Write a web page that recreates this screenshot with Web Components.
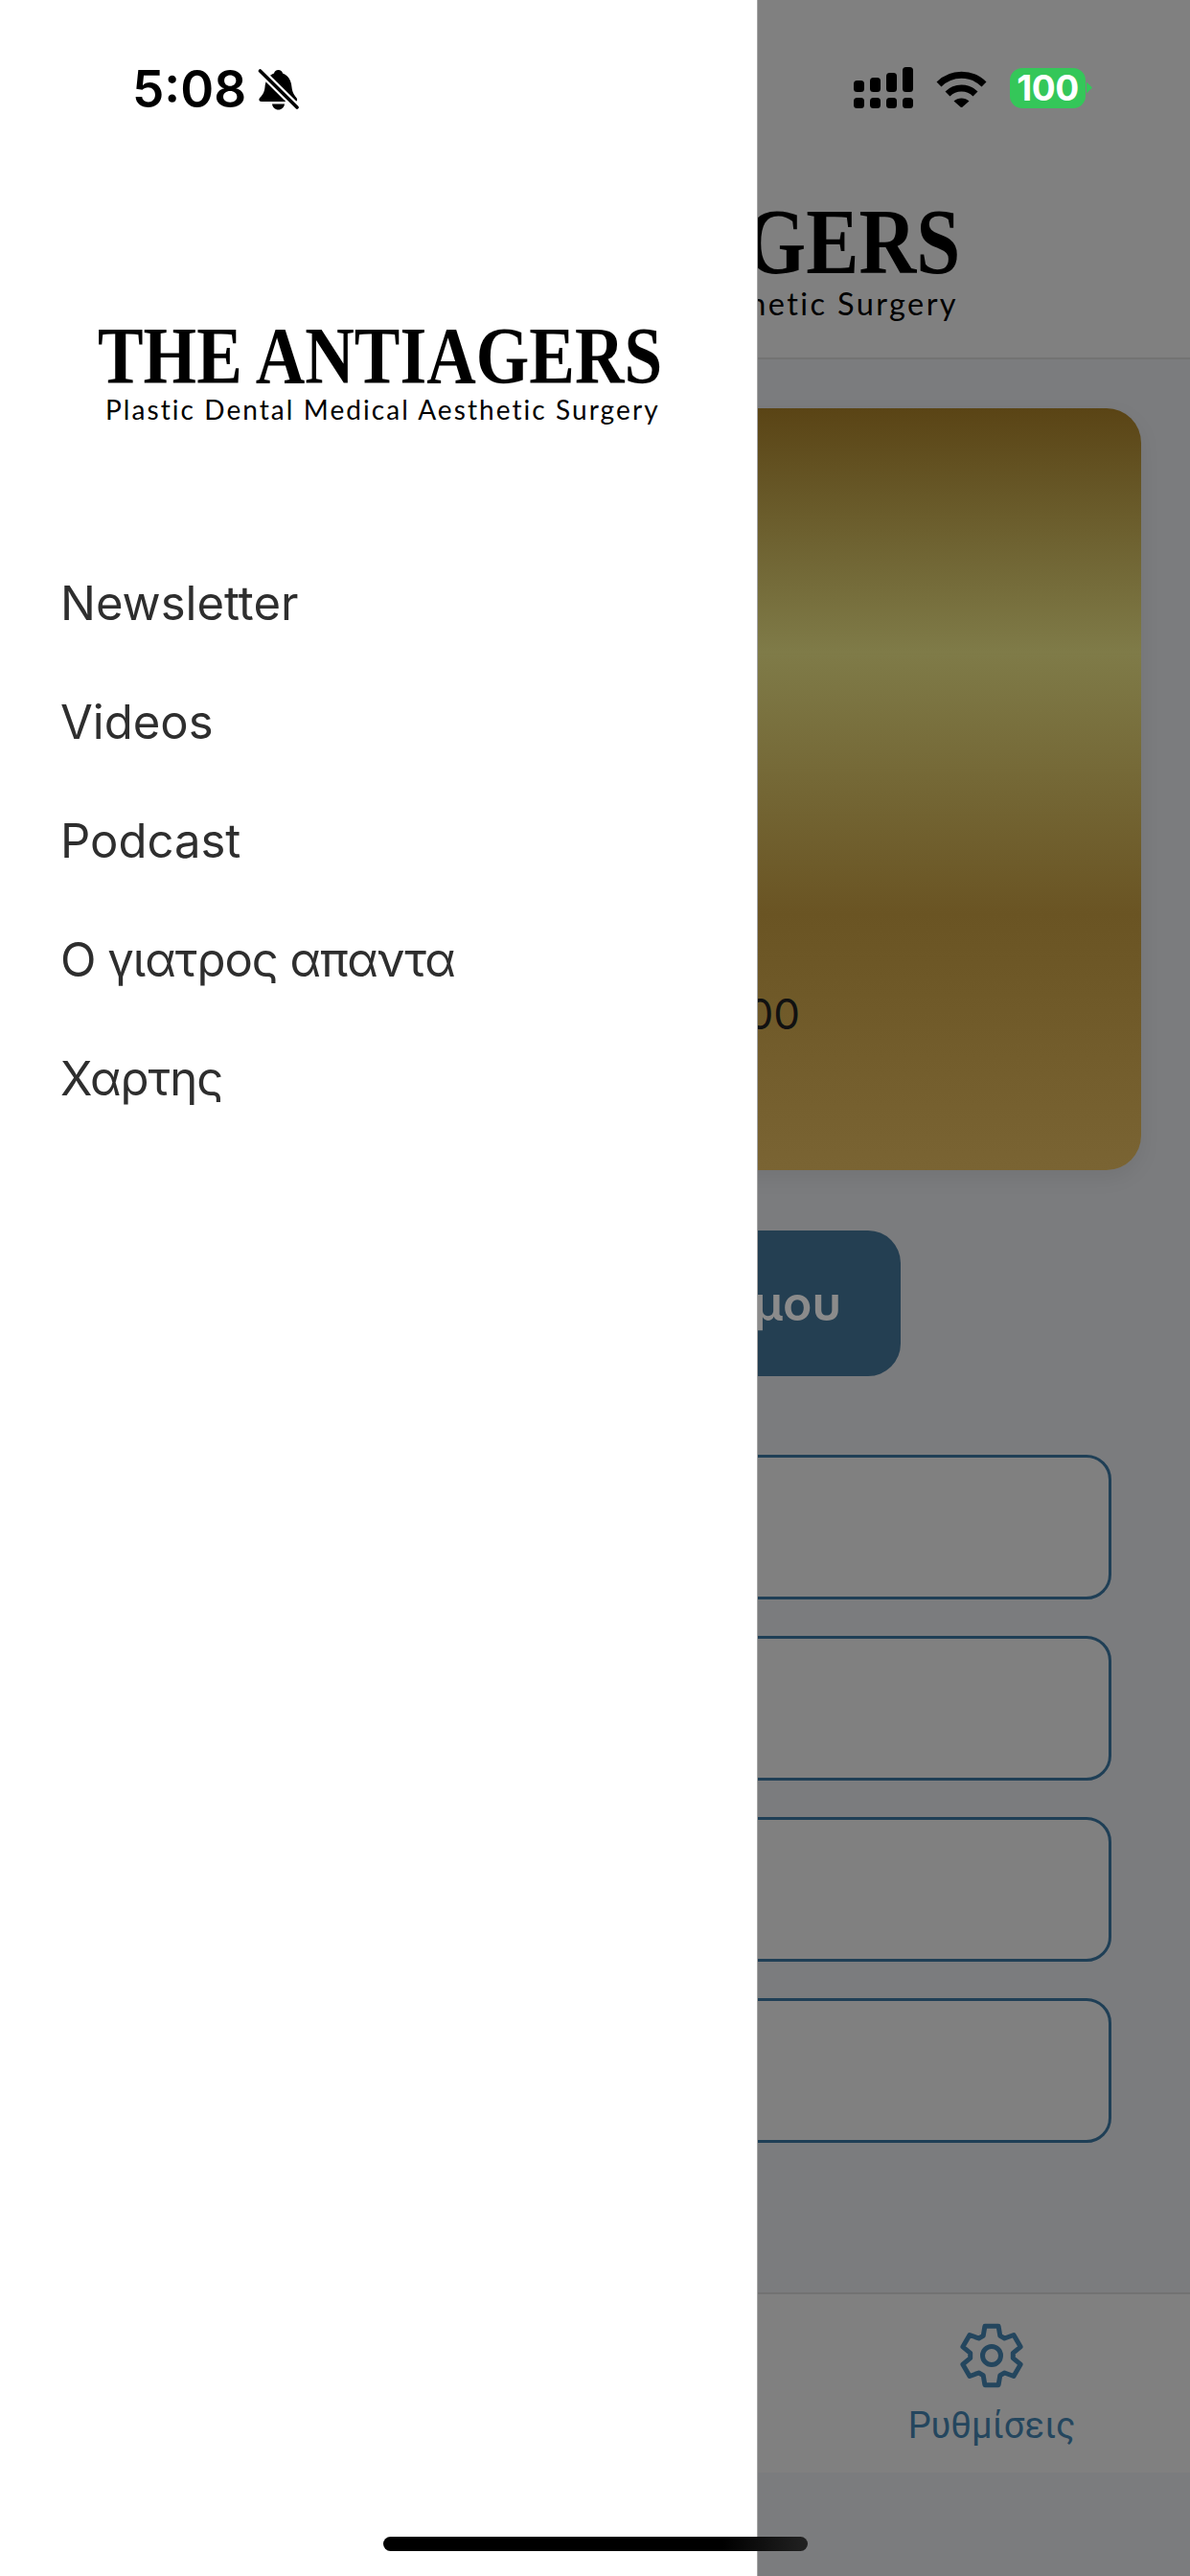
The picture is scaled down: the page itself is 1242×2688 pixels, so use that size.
<!DOCTYPE html>
<html lang="el">
<head>
<meta charset="utf-8">
<title>The Antiagers</title>
<style>
  html, body { margin: 0; padding: 0; background: #7b7c7e; }
</style>
</head>
<body>
<app-shell>
  <side-drawer slot="drawer">
    <status-clock slot="status" time="5:08"></status-clock>
    <brand-logo slot="logo" name="THE ANTIAGERS" tagline="Plastic Dental Medical Aesthetic Surgery"></brand-logo>
    <menu-item>Newsletter</menu-item>
    <menu-item>Videos</menu-item>
    <menu-item>Podcast</menu-item>
    <menu-item tight>Ο γιατρος απαντα</menu-item>
    <menu-item tight>Χαρτης</menu-item>
  </side-drawer>
  <dim-page slot="page">
    <status-icons slot="status"></status-icons>
    <brand-logo slot="logo" align="right" name="GERS" tagline="hetic Surgery"></brand-logo>
    <promo-card>00</promo-card>
    <action-button>μου</action-button>
    <outline-row></outline-row>
    <outline-row></outline-row>
    <outline-row></outline-row>
    <outline-row></outline-row>
    <tab-item slot="tabs" label="Ρυθμίσεις"></tab-item>
  </dim-page>
  <home-bar></home-bar>
</app-shell>

<script>
class AppShell extends HTMLElement {
    constructor() {
        super();
        this.attachShadow({ mode: 'open' });
        this.shadowRoot.innerHTML = `
            <style>
                :host {
                    display: grid;
                    grid-template-columns: 791px 451px;
                    width: 1242px;
                    height: 2688px;
                    position: relative;
                    overflow: hidden;
                }
            </style>
            <slot name="drawer"></slot>
            <slot name="page"></slot>
            <slot></slot>
        `;
    }
}

class SideDrawer extends HTMLElement {
    constructor() {
        super();
        this.attachShadow({ mode: 'open' });
        this.shadowRoot.innerHTML = `
            <style>
                :host {
                    display: flex;
                    flex-direction: column;
                    box-sizing: border-box;
                    height: 2688px;
                    background: #fff;
                    border-right: 1px solid #a4a4a4;
                }
                .logo { display: block; padding: 218px 0 0 102px; }
                nav { display: flex; flex-direction: column; padding: 123px 0 0 63px; }
            </style>
            <slot name="status"></slot>
            <div class="logo"><slot name="logo"></slot></div>
            <nav><slot></slot></nav>
        `;
    }
}

class StatusClock extends HTMLElement {
    constructor() {
        super();
        this.attachShadow({ mode: 'open' });
    }

    connectedCallback() {
        this.shadowRoot.innerHTML = `
            <style>
                :host {
                    display: flex;
                    align-items: center;
                    gap: 12px;
                    height: 62px;
                    padding: 62px 0 0 138px;
                    font: 600 53px/62px Inter, "Liberation Sans", sans-serif;
                    color: #000;
                }
                svg { display: block; margin-top: -1px; }
            </style>
            <span>${this.getAttribute('time')}</span>
            <svg width="44" height="46" viewBox="0 0 44 46">
                <path d="M21.5 3C24 3 25.5 4.5 26 6.500C32 8.500 35 14.500 35.500 21C36 27 39 30 41 33C41.500 35 40.500 36 39 36H4C2 36 1 35 1.500 33C4 30 7 27 7.500 21C8 14.500 11 8.500 17 6.500C17.500 4.500 19 3 21.500 3Z"/>
                <path d="M15 38.500H28C27.500 42 25 44.500 21.500 44.500C18 44.500 15.500 42 15 38.500Z"/>
                <path d="M0 1.500L43 44" stroke="#fff" stroke-width="8"/>
                <path d="M2.500 4L41 42" stroke="#000" stroke-width="3.600" stroke-linecap="round"/>
            </svg>
        `;
    }
}

class StatusIcons extends HTMLElement {
    constructor() {
        super();
        this.attachShadow({ mode: 'open' });
        const bars = [[0, 14], [17, 11], [34, 6], [51, 0]]
            .map(([x, y]) => `<rect x="${x}" y="${y}" width="11" height="${26 - y}" rx="3.500"/><rect x="${x}" y="32" width="11" height="11" rx="3.500"/>`)
            .join('');
        this.shadowRoot.innerHTML = `
            <style>
                :host {
                    display: flex;
                    align-items: center;
                    height: 43px;
                    padding: 70px 0 0 100px;
                    color: #000;
                }
                .signal { margin-right: 24px; }
                .wifi { margin-right: 24px; }
                .battery {
                    width: 79px;
                    height: 42px;
                    border-radius: 13px;
                    background: #34c759;
                    color: #fff;
                    font: 700 37px/42px Inter, "Liberation Sans", sans-serif;
                    text-align: center;
                    letter-spacing: -0.5px;
                }
                .nub {
                    width: 6px;
                    height: 12px;
                    margin-left: 1px;
                    background: #34c759;
                    clip-path: polygon(0 0, 100% 50%, 0 100%);
                }
            </style>
            <svg class="signal" width="62" height="43" viewBox="0 0 62 43">${bars}</svg>
            <svg class="wifi" width="53" height="40" viewBox="0 0 53 40">
                <path d="M3 16C16 3 37 3 50 16M12 26C20 18 33 18 41 26" fill="none" stroke="#000" stroke-width="7"/>
                <path d="M18.500 33.500C23 29.500 30 29.500 34.500 33.500L26.500 40.500Z"/>
            </svg>
            <div class="battery">100</div>
            <div class="nub"></div>
        `;
    }
}

class BrandLogo extends HTMLElement {
    constructor() {
        super();
        this.attachShadow({ mode: 'open' });
    }

    connectedCallback() {
        const right = this.getAttribute('align') === 'right';
        // the header copy of the logo is bigger than the drawer one
        const size = right ? 1.16 : 1;
        this.shadowRoot.innerHTML = `
            <style>
                :host {
                    display: flex;
                    flex-direction: column;
                    align-items: ${right ? 'flex-end' : 'flex-start'};
                    white-space: nowrap;
                    color: #000;
                }
                .name {
                    font: 700 ${84 * size}px/${60 * size}px "Liberation Serif", serif;
                    transform: scaleX(0.85);
                    transform-origin: ${right ? 'right' : 'left'} center;
                }
                .tagline {
                    margin: ${8 * size}px ${right ? 2 : 0}px 0 ${right ? 0 : 8}px;
                    font: 400 ${28 * size}px/${35 * size}px Lato, "Liberation Sans", sans-serif;
                    letter-spacing: ${2.07 * size}px;
                }
            </style>
            <div class="name">${this.getAttribute('name')}</div>
            <div class="tagline">${this.getAttribute('tagline')}</div>
        `;
    }
}

class MenuItem extends HTMLElement {
    constructor() {
        super();
        this.attachShadow({ mode: 'open' });
        this.shadowRoot.innerHTML = `
            <style>
                :host {
                    display: block;
                    height: 124px;
                    font: 400 49px/124px Inter, "Noto Sans", sans-serif;
                    color: #2e2e2e;
                    white-space: nowrap;
                }
                /* Inter's greek runs wider than the reference */
                :host([tight]) { letter-spacing: -1px; }
            </style>
            <slot></slot>
        `;
    }
}

class DimPage extends HTMLElement {
    constructor() {
        super();
        this.attachShadow({ mode: 'open' });
        this.shadowRoot.innerHTML = `
            <style>
                :host {
                    display: flex;
                    flex-direction: column;
                    height: 2688px;
                    overflow: hidden;
                    background: #7b7c7e;
                }
                header {
                    box-sizing: border-box;
                    height: 375px;
                    flex: none;
                    background: #808080;
                    border-bottom: 2px solid #737373;
                }
                .logo { display: block; padding: 105px 240px 0 0; margin-left: -600px; }
                main {
                    flex: 1;
                    display: flex;
                    flex-direction: column;
                    padding-top: 51px;
                }
                .tabs {
                    box-sizing: border-box;
                    height: 188px;
                    flex: none;
                    margin-bottom: 108px;
                    background: #808080;
                    border-top: 2px solid #727272;
                    display: flex;
                    justify-content: flex-end;
                }
            </style>
            <header>
                <slot name="status"></slot>
                <div class="logo"><slot name="logo"></slot></div>
            </header>
            <main><slot></slot></main>
            <div class="tabs"><slot name="tabs"></slot></div>
        `;
    }
}

class PromoCard extends HTMLElement {
    constructor() {
        super();
        this.attachShadow({ mode: 'open' });
        this.shadowRoot.innerHTML = `
            <style>
                :host {
                    display: flex;
                    justify-content: flex-end;
                    align-items: flex-end;
                    box-sizing: border-box;
                    height: 795px;
                    margin: 0 51px 0 -60px;
                    padding: 0 356px 138px 0;
                    border-radius: 0 36px 36px 0;
                    background: linear-gradient(180deg, #5a4415 0%, #7f7b48 32%, #6a5423 66.400%, #7a6433 100%);
                    box-shadow: 0 8px 22px rgba(0, 0, 0, 0.07);
                    font: 400 44px/50px Inter, "Liberation Sans", sans-serif;
                    color: #111;
                    white-space: nowrap;
                }
            </style>
            <slot></slot>
        `;
    }
}

class ActionButton extends HTMLElement {
    constructor() {
        super();
        this.attachShadow({ mode: 'open' });
        this.shadowRoot.innerHTML = `
            <style>
                :host {
                    display: flex;
                    justify-content: flex-end;
                    align-items: center;
                    box-sizing: border-box;
                    height: 152px;
                    width: 209px;
                    margin: 63px 0 82px -60px;
                    padding-right: 62px;
                    border-radius: 0 34px 34px 0;
                    background: #243f52;
                    font: 600 50px/60px Inter, "Noto Sans", sans-serif;
                    color: #8b8b8b;
                    white-space: nowrap;
                }
            </style>
            <slot></slot>
        `;
    }
}

class OutlineRow extends HTMLElement {
    constructor() {
        super();
        this.attachShadow({ mode: 'open' });
        this.shadowRoot.innerHTML = `
            <style>
                :host {
                    display: block;
                    box-sizing: border-box;
                    height: 151px;
                    margin: 0 82px 38px -60px;
                    border: 3px solid #1f3f56;
                    border-radius: 26px;
                    background: #808080;
                }
            </style>
        `;
    }
}

class TabItem extends HTMLElement {
    constructor() {
        super();
        this.attachShadow({ mode: 'open' });
    }

    gearPath() {
        const pts = [];
        const at = (deg, r) => {
            const a = deg * Math.PI / 180;
            return `${(34 + r * Math.cos(a)).toFixed(1)} ${(34 + r * Math.sin(a)).toFixed(1)}`;
        };
        for (let i = 0; i < 6; i++) {
            const c = 90 + i * 60;
            pts.push(at(c - 23, 22.5), at(c - 13, 31.5), at(c + 13, 31.5), at(c + 23, 22.5));
        }
        return `M${pts.join('L')}Z`;
    }

    connectedCallback() {
        this.shadowRoot.innerHTML = `
            <style>
                :host {
                    display: flex;
                    flex-direction: column;
                    align-items: center;
                    width: 300px;
                    margin-right: 57px;
                    padding-top: 30px;
                    color: #24465e;
                }
                svg { display: block; }
                span {
                    margin-top: 14px;
                    font: 400 38px/50px Roboto, "Noto Sans", sans-serif;
                    white-space: nowrap;
                }
            </style>
            <svg width="68" height="68" viewBox="0 0 68 68" fill="none" stroke="currentColor" stroke-width="5" stroke-linejoin="round">
                <path d="${this.gearPath()}"/>
                <circle cx="34" cy="34" r="9.500"/>
            </svg>
            <span>${this.getAttribute('label')}</span>
        `;
    }
}

class HomeBar extends HTMLElement {
    constructor() {
        super();
        this.attachShadow({ mode: 'open' });
        this.shadowRoot.innerHTML = `
            <style>
                :host {
                    position: absolute;
                    left: 400px;
                    top: 2647px;
                    width: 443px;
                    height: 15px;
                    border-radius: 8px;
                    background: linear-gradient(90deg, #000 0%, #000 80%, #222 100%);
                }
            </style>
        `;
    }
}

customElements.define('app-shell', AppShell);
customElements.define('side-drawer', SideDrawer);
customElements.define('status-clock', StatusClock);
customElements.define('status-icons', StatusIcons);
customElements.define('brand-logo', BrandLogo);
customElements.define('menu-item', MenuItem);
customElements.define('dim-page', DimPage);
customElements.define('promo-card', PromoCard);
customElements.define('action-button', ActionButton);
customElements.define('outline-row', OutlineRow);
customElements.define('tab-item', TabItem);
customElements.define('home-bar', HomeBar);
</script>
</body>
</html>
